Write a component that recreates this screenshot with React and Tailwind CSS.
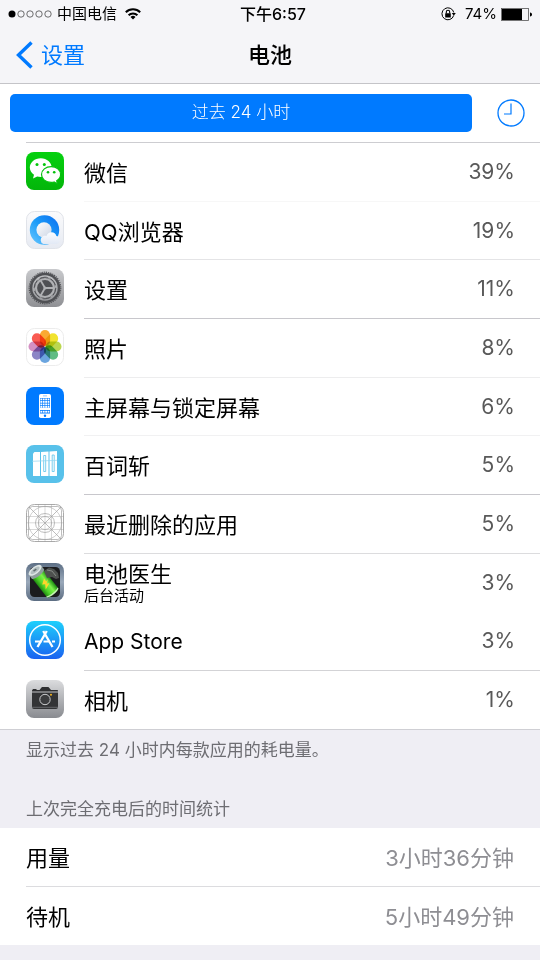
import React from 'react';

function WeChatIcon() {
  return (
    <svg viewBox="0 0 38 38" className="size-full" aria-hidden="true">
      <defs>
        <linearGradient id="wechat" x1="0" y1="0" x2="0" y2="1">
          <stop offset="0" stopColor="#05d10f" />
          <stop offset="1" stopColor="#03b50a" />
        </linearGradient>
      </defs>
      <rect width="38" height="38" rx="8" fill="url(#wechat)" />
      <path d="M14.8 6.2C8.700 6.200 3.800 10.400 3.800 15.600c0 2.900 1.600 5.500 4.200 7.200L7 26.600l4.200-2.200c1.100.3 2.300.5 3.600.5 6.100 0 10.900-4.200 10.900-9.300S20.900 6.200 14.800 6.200z" fill="#fff" />
      <path d="M25.200 14.600c-5.400 0-9.700 3.500-9.700 7.900s4.300 7.900 9.700 7.900c1 0 2-.1 2.900-.4l3.400 1.900-.8-3.100c2.400-1.500 3.900-3.700 3.900-6.300 0-4.400-4.200-7.900-9.400-7.900z" fill="#fff" stroke="#04c00c" strokeWidth="1.200" />
      <circle cx="11" cy="12.500" r="1.500" fill="#04c60c" />
      <circle cx="18.300" cy="12.500" r="1.500" fill="#04c60c" />
      <circle cx="22" cy="20.300" r="1.300" fill="#04c00c" />
      <circle cx="28.200" cy="20.300" r="1.300" fill="#04c00c" />
    </svg>
  );
}

function QQBrowserIcon() {
  return (
    <svg viewBox="0 0 38 38" className="size-full" aria-hidden="true">
      <defs>
        <linearGradient id="qqbg" x1="0" y1="0" x2="0" y2="1">
          <stop offset="0" stopColor="#fbfbfc" />
          <stop offset="1" stopColor="#e6eaf2" />
        </linearGradient>
        <linearGradient id="qqring" x1="0" y1="1" x2="1" y2="0">
          <stop offset="0" stopColor="#6cc9ff" />
          <stop offset="0.500" stopColor="#1c9cf8" />
          <stop offset="1" stopColor="#0a6cf0" />
        </linearGradient>
        <linearGradient id="qqcore" x1="0" y1="0" x2="1" y2="1">
          <stop offset="0" stopColor="#ffffff" />
          <stop offset="1" stopColor="#ccd5e4" />
        </linearGradient>
        <linearGradient id="qqcloud" x1="0" y1="0" x2="0" y2="1">
          <stop offset="0" stopColor="#fafcff" />
          <stop offset="1" stopColor="#e2e9f5" />
        </linearGradient>
      </defs>
      <rect x="0.500" y="0.500" width="37" height="37" rx="8" fill="url(#qqbg)" stroke="#e0e3e9" />
      <circle cx="18.500" cy="19" r="14.700" fill="url(#qqring)" />
      <circle cx="18" cy="18.800" r="7.600" fill="url(#qqcore)" />
      <path d="M17.500 33a4.200 4.200 0 0 1-.4-7.800c1.200-.6 2.400-.6 3.400-.1 1-5 9-5.400 9.900 0 4.800.3 4.800 7.900 0 7.900z" fill="url(#qqcloud)" />
    </svg>
  );
}

function SettingsIcon() {
  return (
    <svg viewBox="0 0 38 38" className="size-full" aria-hidden="true">
      <defs>
        <linearGradient id="setbg" x1="0" y1="0" x2="0" y2="1">
          <stop offset="0" stopColor="#c9cacd" />
          <stop offset="1" stopColor="#8f9094" />
        </linearGradient>
      </defs>
      <rect width="38" height="38" rx="8" fill="url(#setbg)" />
      <circle cx="19" cy="19" r="15.800" fill="none" stroke="#55565a" strokeWidth="1.200" strokeDasharray="1.300 0.900" />
      <circle cx="19" cy="19" r="14" fill="none" stroke="#4f5054" strokeWidth="2.600" />
      <circle cx="19" cy="19" r="10.800" fill="#4f5054" stroke="#a9aaad" strokeWidth="1" />
      <circle cx="19" cy="19" r="9" fill="none" stroke="#b0b1b4" strokeWidth="2.200" />
      <circle cx="19" cy="19" r="10.800" fill="none" stroke="#4f5054" strokeWidth="1" strokeDasharray="8 3.310" />
      <path d="M19 19h9M19 19l-4.500-7.800M19 19l-4.500 7.800" stroke="#b0b1b4" strokeWidth="1.800" />
      <circle cx="19" cy="19" r="1.600" fill="#b0b1b4" />
    </svg>
  );
}

const petals = ['#f9a01c', '#f0e018', '#b4d33c', '#4fb575', '#5b9bdc', '#8078c0', '#cf84bd', '#f8493f'];

function PhotosIcon() {
  return (
    <svg viewBox="0 0 38 38" className="size-full" aria-hidden="true">
      <rect x="0.500" y="0.500" width="37" height="37" rx="8" fill="#fff" stroke="#ececec" />
      <g className="isolate">
        {petals.map((color, i) => (
          <rect
            key={color}
            x="13.900"
            y="2"
            width="10.200"
            height="16"
            rx="5.100"
            fill={color}
            fillOpacity="0.900"
            transform={`rotate(${i * 45} 19 18.500)`}
            className="mix-blend-multiply"
          />
        ))}
      </g>
    </svg>
  );
}

function HomeScreenIcon() {
  return (
    <svg viewBox="0 0 38 38" className="size-full" aria-hidden="true">
      <rect width="38" height="38" rx="8" fill="#007aff" />
      <rect x="13" y="7" width="12" height="24" rx="1.800" fill="#fff" />
      <rect x="14" y="11" width="10" height="15.500" fill="#007aff" />
      <g fill="#fff">
        {[11.5, 14, 16.5, 19, 23.8].map((y) =>
          [14.4, 16.8, 19.2, 21.6].map((x) => <rect key={`${x}-${y}`} x={x} y={y} width="1.800" height="1.800" />)
        )}
        <path d="M14 20.800h10v2.200H14z" />
      </g>
      <rect x="17" y="8.500" width="4" height="0.800" fill="#79b8ff" />
      <circle cx="19" cy="28.700" r="1.200" fill="#007aff" />
    </svg>
  );
}

function WordsIcon() {
  return (
    <svg viewBox="0 0 38 38" className="size-full" aria-hidden="true">
      <rect width="38" height="38" rx="8" fill="#58c1ea" />
      <g fill="#fff">
        <path d="M7 8.500L8.500 7H14v24H7z" />
        <path d="M15 7l7.500-.5V31H15z" />
        <path d="M23.500 6.500L31 6v25h-7.500z" />
      </g>
      <path d="M17.700 10.500h2v16h-2zM26.200 10h2v16.500h-2z" stroke="#58c1ea" strokeWidth="0.800" fill="#fff" />
      <path d="M6 16.300l25-1" stroke="#8fd6f1" strokeWidth="0.700" />
    </svg>
  );
}

function DeletedIcon() {
  return (
    <svg viewBox="0 0 38 38" className="size-full" aria-hidden="true">
      <g fill="none" stroke="#a0a0a0" strokeWidth="0.700">
        <rect x="0.500" y="0.500" width="37" height="37" rx="8" fill="#fff" strokeWidth="0.900" />
        <rect x="2.500" y="2.500" width="33" height="33" rx="4" />
        <circle cx="19" cy="19" r="16.500" strokeWidth="0.500" />
        <circle cx="19" cy="19" r="9.500" />
        <circle cx="19" cy="19" r="6.500" strokeWidth="0.600" />
        <path d="M0 12.500h38M0 25.500h38M12.500 0v38M25.500 0v38" strokeWidth="0.400" />
        <path d="M0 18.800h38M19 0v38" strokeWidth="0.400" />
        <path d="M3 3l32 32M35 3L3 35" />
      </g>
    </svg>
  );
}

function BatteryDoctorIcon() {
  return (
    <svg viewBox="0 0 38 38" className="size-full" aria-hidden="true">
      <defs>
        <linearGradient id="docbg" x1="0" y1="0" x2="0" y2="1">
          <stop offset="0" stopColor="#5d6f85" />
          <stop offset="0.500" stopColor="#9aa9ba" />
          <stop offset="1" stopColor="#5c6d82" />
        </linearGradient>
        <linearGradient id="docgreen" x1="0" y1="0" x2="1" y2="0">
          <stop offset="0" stopColor="#1f8a10" />
          <stop offset="0.300" stopColor="#4fd42a" />
          <stop offset="0.650" stopColor="#7df24a" />
          <stop offset="1" stopColor="#1a8a10" />
        </linearGradient>
      </defs>
      <rect width="38" height="38" rx="8" fill="url(#docbg)" />
      <rect x="4" y="4" width="30" height="30" rx="4.500" fill="#1b1c1e" />
      <g transform="rotate(-38 18.500 19)">
        <rect x="11" y="5" width="14.500" height="29" rx="2.500" fill="url(#docgreen)" />
        <path d="M11 31.500c4 1.800 10.500 1.800 14.500 0v1.200c-4 2.200-10.500 2.200-14.500 0z" fill="#c5efb8" />
        <path d="M10.500 4.500h15.500v4.500c-4 2.500-11.500 2.500-15.500 0z" fill="#8f9f9d" />
        <ellipse cx="18.250" cy="4" rx="7.700" ry="3.600" fill="#dfe7e6" />
        <ellipse cx="18.250" cy="4" rx="5.500" ry="2.200" fill="#b3bfc0" />
        <path d="M16.500 3h3.500v1.500h-3.500z" fill="#5f6c6e" />
      </g>
      <path d="M18 8l5-3.500 5 1.500 4 4 1 5-3 1-4-2-5 1z" fill="#4d514e" />
      <path d="M21 7l5 1 4 5" stroke="#8b918c" strokeWidth="0.900" fill="none" />
      <path d="M18 15.500l-1.800 6 3-.3.500 5.300 3.800-6.300-2.800.2 1.200-4.400-1.700 2.600z" fill="#ffd42a" />
    </svg>
  );
}

function AppStoreIcon() {
  return (
    <svg viewBox="0 0 38 38" className="size-full" aria-hidden="true">
      <defs>
        <linearGradient id="store" x1="0" y1="0" x2="0" y2="1">
          <stop offset="0" stopColor="#1ed0fc" />
          <stop offset="1" stopColor="#1a62f0" />
        </linearGradient>
      </defs>
      <rect width="38" height="38" rx="8" fill="url(#store)" />
      <g fill="none" stroke="#fff">
        <circle cx="19" cy="19" r="15.300" strokeWidth="1.500" />
        <path d="M20.800 10l-9.300 16M17.200 10l9.300 16" strokeWidth="2.300" />
        <path d="M9 20.500h6.500M17.500 20.500h6M26 20.500h3" strokeWidth="2" />
      </g>
    </svg>
  );
}

function CameraIcon() {
  return (
    <svg viewBox="0 0 38 38" className="size-full" aria-hidden="true">
      <defs>
        <linearGradient id="cam" x1="0" y1="0" x2="0" y2="1">
          <stop offset="0" stopColor="#dbdcde" />
          <stop offset="1" stopColor="#898b90" />
        </linearGradient>
      </defs>
      <rect width="38" height="38" rx="8" fill="url(#cam)" />
      <path d="M6 11.500V10.500l1-1.500h3l1 1h2.500l2-2.500c.3-.4.700-.5 1.200-.5h5c.5 0 .9.100 1.200.5L25 10h6c.6 0 1 .4 1 1v.500z" fill="#2e2f31" />
      <path d="M6 12.500h26V27c0 1.200-.8 2-2 2H8c-1.200 0-2-.8-2-2z" fill="#333436" />
      <path d="M6 27.300h26" stroke="#8a8b8e" strokeWidth="0.600" />
      <circle cx="19" cy="19.500" r="6.500" fill="#333436" />
      <circle cx="19" cy="19.500" r="5.200" fill="#3b3c3e" stroke="#c9cacc" strokeWidth="1" />
      <circle cx="25" cy="14.800" r="1" fill="#f6b41a" />
    </svg>
  );
}

const apps = [
  { name: '微信', value: '39%', Icon: WeChatIcon, line: 'border-[#f7f7f7]' },
  { name: 'QQ浏览器', value: '19%', Icon: QQBrowserIcon, line: 'border-[#e4e4e6]' },
  { name: '设置', value: '11%', Icon: SettingsIcon, line: 'border-[#c8c7cc]' },
  { name: '照片', value: '8%', Icon: PhotosIcon, line: 'border-[#ededee]' },
  { name: '主屏幕与锁定屏幕', value: '6%', Icon: HomeScreenIcon, line: 'border-[#f1f1f2]' },
  { name: '百词斩', value: '5%', Icon: WordsIcon, line: 'border-[#c8c7cc]' },
  { name: '最近删除的应用', value: '5%', Icon: DeletedIcon, line: 'border-[#dcdcde]' },
  { name: '电池医生', note: '后台活动', value: '3%', Icon: BatteryDoctorIcon, line: 'border-white' },
  { name: 'App Store', value: '3%', Icon: AppStoreIcon, line: 'border-[#d3d3d6]', latin: true },
  { name: '相机', value: '1%', Icon: CameraIcon, line: 'border-white' },
];

function StatusBar() {
  return (
    <div className="grid h-7 grid-cols-[1fr_auto_1fr] items-center px-2 text-base leading-5">
      <div className="flex items-center">
        <svg width="46" height="10" viewBox="0 0 46 10" aria-hidden="true">
          <circle cx="4" cy="5" r="3.500" />
          {[13, 22, 31, 40].map((cx) => (
            <circle key={cx} cx={cx} cy="5" r="3.200" fill="none" stroke="#333" strokeWidth="0.700" />
          ))}
        </svg>
        <span className="ml-[3px] text-[15px]">中国电信</span>
        <svg className="ml-2" width="16" height="12" viewBox="0 0 16 12" aria-hidden="true">
          <g fill="none" stroke="#000" strokeWidth="2">
            <path d="M0.800 4.300a10.200 10.200 0 0 1 14.400 0" />
            <path d="M3.600 7.300a6.200 6.200 0 0 1 8.800 0" />
          </g>
          <path d="M8 11.600L5.500 9.100a3.500 3.500 0 0 1 5 0z" />
        </svg>
      </div>
      <div className="pl-[6px] font-medium">下午6:57</div>
      <div className="flex items-center justify-end">
        <svg width="15" height="14" viewBox="0 0 15 14" aria-hidden="true">
          <path d="M12.700 8.500A6 6 0 1 1 12.800 5.500" fill="none" stroke="#000" />
          <path d="M10.800 6h4l-2 2.700z" />
          <rect x="4.200" y="6.200" width="5.600" height="4.200" rx="0.500" />
          <path d="M5.300 6.500V5a1.700 1.700 0 0 1 3.400 0v1.500" fill="none" stroke="#000" strokeWidth="1.100" />
        </svg>
        <span className="ml-[9px] text-[15px]">74%</span>
        <svg className="ml-1" width="31" height="13" viewBox="0 0 31 13" aria-hidden="true">
          <rect x="0.500" y="0.500" width="27" height="12" fill="none" stroke="#555" strokeWidth="0.800" />
          <rect x="1" y="1" width="20" height="11" />
          <path d="M29 4.500c1.500.3 2 1 2 2s-.5 1.700-2 2z" />
        </svg>
      </div>
    </div>
  );
}

export default function App() {
  return (
    <div className="min-h-screen bg-[#efeef4] font-[Inter,'Noto_Sans_CJK_SC',sans-serif] text-black">
      <header className="border-b border-[#c4c4c8] bg-[#f5f5f8]">
        <StatusBar />
        <nav className="grid h-[55px] grid-cols-[1fr_auto_1fr] items-center px-4 pb-[2px] text-[22px] leading-8">
          <a href="#settings" className="flex items-center gap-2 justify-self-start text-[#007aff]">
            <svg width="17" height="28" viewBox="0 0 17 28" aria-hidden="true">
              <path d="M15.500 1.500L2.500 14l13 12.500" fill="none" stroke="currentColor" strokeWidth="3.400" />
            </svg>
            设置
          </a>
          <h1 className="text-[22px] font-medium">电池</h1>
        </nav>
      </header>

      <main>
        <section className="border-b border-[#cfcfd4] bg-white">
          <div className="flex items-start gap-[25px] py-[10px] pr-[15px] pl-[10px]">
            <button type="button" className="h-[38px] grow rounded-[5px] bg-[#007aff] text-[17px] font-light text-white">
              过去 24 小时
            </button>
            <button type="button" aria-label="显示使用时间" className="flex h-[38px] items-center text-[#007aff]">
              <svg width="28" height="28" viewBox="0 0 28 28" aria-hidden="true">
                <circle cx="14" cy="14" r="13" fill="none" stroke="currentColor" strokeWidth="1.300" />
                <path d="M14 4.500V15H7" fill="none" stroke="currentColor" strokeWidth="1.200" />
              </svg>
            </button>
          </div>
          <div className="ml-[26px] border-t border-[#cdcdd1]" />
          <ul>
            {apps.map(({ name, note, value, Icon, line, latin }) => (
              <li key={name} className="flex h-[59px] items-stretch pl-[26px] last:h-[58px] nth-[3n+2]:h-[58px]">
                <div className="flex items-center pb-[3px]">
                  <div className="size-[38px]">
                    <Icon />
                  </div>
                </div>
                <div className={`ml-5 flex grow items-center justify-between border-b pr-[25px] ${line}`}>
                  <div className="pt-[2px]">
                    <div className={`${latin ? 'text-[21px]' : 'text-[22px]'} ${note ? 'leading-6' : 'leading-8'}`}>{name}</div>
                    {note && <div className="text-[15px] leading-5">{note}</div>}
                  </div>
                  <div className="text-[21px] leading-8 text-[#595959]">{value}</div>
                </div>
              </li>
            ))}
          </ul>
        </section>
        <p className="px-[26px] pt-2 text-[17px] leading-6 text-[#6d6d72]">显示过去 24 小时内每款应用的耗电量。</p>

        <section>
          <h2 className="px-[26px] pt-[35px] pb-[7px] text-[17px] leading-6 text-[#6d6d72]">上次完全充电后的时间统计</h2>
          <dl className="bg-white pl-[26px] text-[22px] leading-8">
            <div className="flex h-[59px] items-center justify-between border-b border-[#dcdcdf] pt-[2px] pr-[26px]">
              <dt>用量</dt>
              <dd className="text-[#8e8e93]">3小时36分钟</dd>
            </div>
            <div className="flex h-[58px] items-center justify-between pt-[2px] pr-[26px]">
              <dt>待机</dt>
              <dd className="text-[#8e8e93]">5小时49分钟</dd>
            </div>
          </dl>
        </section>
      </main>
    </div>
  );
}
